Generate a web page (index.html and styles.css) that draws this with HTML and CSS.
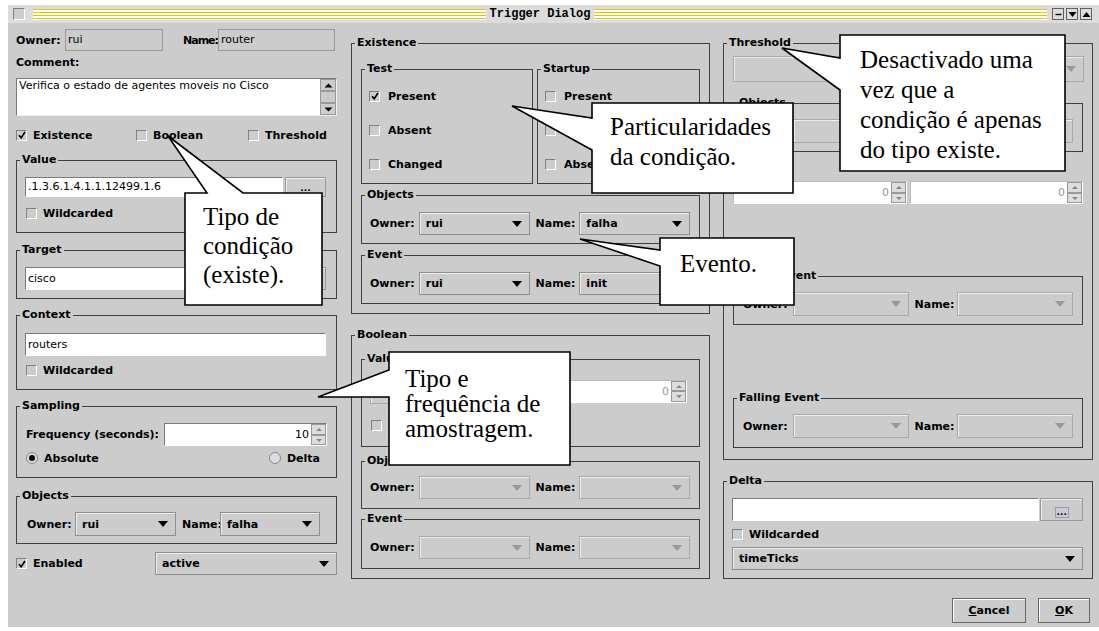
FILE: index.html
```html
<!DOCTYPE html>
<html lang="pt">
<head>
    <meta charset="UTF-8">
    <meta name="viewport" content="width=device-width, initial-scale=1.0">
    <title>Trigger Dialog</title>
    <link rel="stylesheet" href="styles.css">
</head>
<body>
<div class="window">
    <div class="titlebar">
        <span class="tb-box"></span>
        <span class="stripes"></span>
        <span class="tb-title">Trigger Dialog</span>
        <span class="stripes"></span>
        <span class="tb-btns">
            <span class="tb-btn"><svg width="9" height="9"><path d="M1.5 4.5h6" stroke="#000" stroke-width="1.4"/></svg></span>
            <span class="tb-btn"><svg width="9" height="9"><path d="M0.5 2h8l-4 5z" fill="#000"/></svg></span>
            <span class="tb-btn"><svg width="9" height="9"><path d="M0.5 7h8l-4-5z" fill="#000"/></svg></span>
        </span>
    </div>

    <div class="content">
        <!-- coluna esquerda -->
        <div class="col col-left">
            <div class="row top-row">
                <span class="lbl owner-lbl">Owner:</span>
                <span class="field off owner-f">rui</span>
                <span class="lbl name-lbl">Name:</span>
                <span class="field off name-f">router</span>
            </div>
            <div class="lbl comment-lbl">Comment:</div>
            <div class="textarea">
                <span class="ta-text">Verifica o estado de agentes moveis no Cisco</span>
                <span class="vscroll">
                    <span class="sb-btn"><svg width="9" height="5"><path d="M0.5 4.5h8l-4-4z" fill="#000"/></svg></span>
                    <span class="sb-thumb"></span>
                    <span class="sb-track"></span>
                    <span class="sb-btn"><svg width="9" height="5"><path d="M0.5 0.5h8l-4 4z" fill="#000"/></svg></span>
                </span>
            </div>
            <div class="row kinds">
                <span class="check k-exist"><span class="cb on"><svg width="8" height="8"><path d="M1 4.2l2.2 2.6L7 1" fill="none" stroke="#000" stroke-width="1.6"/></svg></span>Existence</span>
                <span class="check k-bool"><span class="cb"></span>Boolean</span>
                <span class="check"><span class="cb"></span>Threshold</span>
            </div>

            <fieldset class="grp g-value">
                <legend>Value</legend>
                <div class="row">
                    <span class="field oid">.1.3.6.1.4.1.1.12499.1.6</span>
                    <span class="dots">...</span>
                </div>
                <span class="check wc"><span class="cb"></span>Wildcarded</span>
            </fieldset>

            <fieldset class="grp g-target">
                <legend>Target</legend>
                <div class="row">
                    <span class="field oid tall">cisco</span>
                    <span class="dots tall">...</span>
                </div>
            </fieldset>

            <fieldset class="grp g-context">
                <legend>Context</legend>
                <span class="field full tall">routers</span>
                <span class="check wc2"><span class="cb"></span>Wildcarded</span>
            </fieldset>

            <fieldset class="grp g-sampling">
                <legend>Sampling</legend>
                <div class="row">
                    <span class="lbl freq-lbl">Frequency (seconds):</span>
                    <span class="spin freq-spin">
                        <span class="spin-val">10</span>
                        <span class="spin-btns"><span class="sp-up"></span><span class="sp-down"></span></span>
                    </span>
                </div>
                <div class="row radios">
                    <span class="check"><span class="radio on"></span>Absolute</span>
                    <span class="check"><span class="radio"></span>Delta</span>
                </div>
            </fieldset>

            <fieldset class="grp g-objects">
                <legend>Objects</legend>
                <div class="row">
                    <span class="lbl own-lbl">Owner:</span>
                    <span class="combo c-own">rui<i class="arr"></i></span>
                    <span class="lbl nm-lbl">Name:</span>
                    <span class="combo c-nm">falha<i class="arr"></i></span>
                </div>
            </fieldset>

            <div class="row enabled-row">
                <span class="check en"><span class="cb on"><svg width="8" height="8"><path d="M1 4.2l2.2 2.6L7 1" fill="none" stroke="#000" stroke-width="1.6"/></svg></span>Enabled</span>
                <span class="combo c-active">active<i class="arr"></i></span>
            </div>
        </div>

        <!-- coluna do meio -->
        <div class="col col-mid">
            <fieldset class="grp g-exist">
                <legend>Existence</legend>
                <div class="row sub-row">
                    <fieldset class="grp g-test">
                        <legend>Test</legend>
                        <span class="check"><span class="cb on"><svg width="8" height="8"><path d="M1 4.2l2.2 2.6L7 1" fill="none" stroke="#000" stroke-width="1.6"/></svg></span>Present</span>
                        <span class="check"><span class="cb"></span>Absent</span>
                        <span class="check"><span class="cb"></span>Changed</span>
                    </fieldset>
                    <fieldset class="grp g-startup">
                        <legend>Startup</legend>
                        <span class="check"><span class="cb"></span>Present</span>
                        <span class="check"><span class="cb"></span></span>
                        <span class="check"><span class="cb"></span>Abse</span>
                    </fieldset>
                </div>
                <fieldset class="grp g-eobj">
                    <legend>Objects</legend>
                    <div class="row">
                        <span class="lbl m-own">Owner:</span>
                        <span class="combo m-combo">rui<i class="arr"></i></span>
                        <span class="lbl m-nm">Name:</span>
                        <span class="combo m-combo">falha<i class="arr"></i></span>
                    </div>
                </fieldset>
                <fieldset class="grp g-eevent">
                    <legend>Event</legend>
                    <div class="row">
                        <span class="lbl m-own">Owner:</span>
                        <span class="combo m-combo">rui<i class="arr"></i></span>
                        <span class="lbl m-nm">Name:</span>
                        <span class="combo m-combo">init<i class="arr"></i></span>
                    </div>
                </fieldset>
            </fieldset>

            <fieldset class="grp g-bool">
                <legend>Boolean</legend>
                <fieldset class="grp g-bval">
                    <legend>Value</legend>
                    <div class="row">
                        <span class="combo off b-op"><i class="arr"></i></span>
                        <span class="spin off b-spin">
                            <span class="spin-val">0</span>
                            <span class="spin-btns"><span class="sp-up"></span><span class="sp-down"></span></span>
                        </span>
                    </div>
                    <span class="check dis b-start"><span class="cb"></span>S</span>
                </fieldset>
                <fieldset class="grp g-bobj">
                    <legend>Objects</legend>
                    <div class="row">
                        <span class="lbl m-own">Owner:</span>
                        <span class="combo off m-combo"><i class="arr"></i></span>
                        <span class="lbl m-nm">Name:</span>
                        <span class="combo off m-combo"><i class="arr"></i></span>
                    </div>
                </fieldset>
                <fieldset class="grp g-bevent">
                    <legend>Event</legend>
                    <div class="row">
                        <span class="lbl m-own">Owner:</span>
                        <span class="combo off m-combo"><i class="arr"></i></span>
                        <span class="lbl m-nm">Name:</span>
                        <span class="combo off m-combo"><i class="arr"></i></span>
                    </div>
                </fieldset>
            </fieldset>
        </div>

        <!-- coluna direita -->
        <div class="col col-right">
            <fieldset class="grp g-thresh">
                <legend>Threshold</legend>
                <span class="combo off t-start"><i class="arr"></i></span>
                <fieldset class="grp g-tobj">
                    <legend>Objects</legend>
                    <div class="row">
                        <span class="r-own"></span>
                        <span class="combo off r-combo"><i class="arr"></i></span>
                        <span class="r-nm"></span>
                        <span class="combo off r-combo"><i class="arr"></i></span>
                    </div>
                </fieldset>
                <div class="row t-spins">
                    <span class="spin off t-spin1">
                        <span class="spin-val">0</span>
                        <span class="spin-btns"><span class="sp-up"></span><span class="sp-down"></span></span>
                    </span>
                    <span class="spin off t-spin2">
                        <span class="spin-val">0</span>
                        <span class="spin-btns"><span class="sp-up"></span><span class="sp-down"></span></span>
                    </span>
                </div>
                <fieldset class="grp g-rise">
                    <legend>Rising Event</legend>
                    <div class="row">
                        <span class="lbl r-own">Owner:</span>
                        <span class="combo off r-combo"><i class="arr"></i></span>
                        <span class="lbl r-nm">Name:</span>
                        <span class="combo off r-combo"><i class="arr"></i></span>
                    </div>
                </fieldset>
                <fieldset class="grp g-fall">
                    <legend>Falling Event</legend>
                    <div class="row">
                        <span class="lbl r-own">Owner:</span>
                        <span class="combo off r-combo"><i class="arr"></i></span>
                        <span class="lbl r-nm">Name:</span>
                        <span class="combo off r-combo"><i class="arr"></i></span>
                    </div>
                </fieldset>
            </fieldset>

            <fieldset class="grp g-delta">
                <legend>Delta</legend>
                <div class="row">
                    <span class="field tall d-field"></span>
                    <span class="dots tall d-dots"><span class="focus">...</span></span>
                </div>
                <span class="check wc3"><span class="cb"></span>Wildcarded</span>
                <span class="combo d-combo">timeTicks<i class="arr"></i></span>
            </fieldset>

            <div class="row btn-row">
                <span class="btn b-cancel"><u>C</u>ancel</span>
                <span class="btn b-ok"><u>O</u>K</span>
            </div>
        </div>
    </div>
</div>

<!-- balões de anotação -->
<svg class="callouts" width="1099" height="631">
    <polygon points="840,35 1065,35 1065,171 840,171 840,90 782,48 840,58" />
    <polygon points="592,103 793,103 793,193 592,193 592,150 512,106 592,118" />
    <polygon points="185,193 207,193 168,136 243,193 322,193 322,305 185,305" />
    <polygon points="660,238 794,238 794,305 660,305 660,266 580,239 660,250" />
    <polygon points="389,352 570,352 570,465 389,465 389,397 318,397 389,370" />
</svg>
<div class="note n-desact">Desactivado uma<br>vez que a<br>condição é apenas<br>do tipo existe.</div>
<div class="note n-partic">Particularidades<br>da condição.</div>
<div class="note n-tipo">Tipo de<br>condição<br>(existe).</div>
<div class="note n-evento">Evento.</div>
<div class="note n-amostra">Tipo e<br>frequência de<br>amostragem.</div>
</body>
</html>
```

FILE: styles.css
```css
body {
    margin: 0;
    background-color: #fff;
    font-family: "DejaVu Sans", Verdana, sans-serif;
    font-size: 11px;
    color: #000;
}
.window {
    margin: 5px 0 0 8px;
    width: 1091px;
    height: 622px;
    background-color: #ccc;
}

/* barra de titulo */
.titlebar {
    display: flex;
    align-items: center;
    height: 18px;
    padding: 0 7px 0 5px;
    background-color: #dcdcdc;
}
.tb-box {
    width: 10px;
    height: 10px;
    border: 1px solid;
    border-color: #808080 #fff #fff #808080;
    background-color: #ccc;
}
.stripes {
    flex: 1;
    height: 11px;
    background: repeating-linear-gradient(to bottom, #e8c400 0 1px, #fff 1px 3px);
}
.tb-box + .stripes {
    margin-left: 8px;
}
.tb-title {
    padding: 0 4px;
    font-family: "Liberation Mono", monospace;
    font-weight: bold;
    font-size: 12px;
}
.tb-btns {
    display: flex;
    gap: 2px;
    margin-left: 5px;
}
.tb-btn {
    display: flex;
    align-items: center;
    justify-content: center;
    width: 10px;
    height: 10px;
    border: 1px solid #606060;
    background-color: #ddd;
}

/* colunas */
.content {
    display: flex;
    padding: 6px 6px 0 8px;
}
.col {
    display: flex;
    flex-direction: column;
}
.col-left {
    width: 321px;
}
.col-mid {
    width: 359px;
    margin-left: 14px;
}
.col-right {
    width: 370px;
    margin-left: 13px;
}
.row {
    display: flex;
    align-items: center;
}
.lbl {
    font-weight: bold;
    white-space: nowrap;
}

/* campos */
.field {
    display: block;
    box-sizing: border-box;
    height: 20px;
    line-height: 18px;
    padding-left: 2px;
    border: 1px solid;
    border-color: #7a7a7a #fff #fff #7a7a7a;
    background-color: #fff;
    white-space: nowrap;
    overflow: hidden;
}
.field.tall {
    height: 23px;
    line-height: 21px;
}
.field.off {
    height: 22px;
    line-height: 20px;
    background-color: #ccc;
    border-color: #9a9a9a;
}
.dots {
    box-sizing: border-box;
    display: flex;
    align-items: flex-end;
    justify-content: center;
    height: 20px;
    margin-left: 2px;
    padding-bottom: 3px;
    border: 1px solid #9a9a9a;
    box-shadow: inset 1px 1px 0 #eee;
    font-weight: bold;
    font-size: 9px;
    line-height: 9px;
}
.dots.tall {
    height: 23px;
}
.combo {
    box-sizing: border-box;
    display: flex;
    align-items: center;
    height: 24px;
    padding-left: 6px;
    border: 1px solid #8f8f8f;
    box-shadow: inset 1px 1px 0 #eee;
    background-color: #ccc;
    font-weight: bold;
}
.arr {
    margin-left: auto;
    margin-right: 7px;
    border-left: 5px solid transparent;
    border-right: 5px solid transparent;
    border-top: 6px solid #000;
}
.combo.off {
    border-color: #aaa;
}
.combo.off .arr {
    border-top-color: #999;
}
.spin {
    box-sizing: border-box;
    display: flex;
    height: 23px;
    border: 1px solid;
    border-color: #7a7a7a #fff #fff #7a7a7a;
    background-color: #fff;
}
.spin-val {
    flex: 1;
    text-align: right;
    line-height: 21px;
    padding-right: 2px;
}
.spin.off {
    border-color: #bbb #fff #fff #bbb;
}
.spin.off .spin-val {
    color: #999;
}
.spin-btns {
    display: flex;
    flex-direction: column;
    width: 15px;
}
.sp-up, .sp-down {
    flex: 1;
    border: 1px solid #999;
    background-color: #ddd;
    position: relative;
}
.sp-up::after, .sp-down::after {
    content: "";
    position: absolute;
    left: 4px;
    top: 3px;
    border-left: 3px solid transparent;
    border-right: 3px solid transparent;
}
.sp-up::after {
    border-bottom: 3px solid #888;
}
.sp-down::after {
    border-top: 3px solid #888;
}

/* caixas e radios */
.check {
    display: flex;
    align-items: center;
    height: 14px;
    font-weight: bold;
}
.cb {
    box-sizing: border-box;
    display: flex;
    align-items: center;
    justify-content: center;
    width: 11px;
    height: 11px;
    margin-right: 6px;
    border: 1px solid;
    border-color: #808080 #fff #fff #808080;
    background-color: #ccc;
}
.check.dis {
    color: #999;
}
.radio {
    box-sizing: border-box;
    display: flex;
    align-items: center;
    justify-content: center;
    width: 12px;
    height: 12px;
    margin-right: 6px;
    border-radius: 50%;
    border: 1px solid #888;
    background-color: #ddd;
}
.radio.on::after {
    content: "";
    width: 6px;
    height: 6px;
    border-radius: 50%;
    background-color: #000;
}

/* grupos */
.grp {
    --pl: 8px;
    box-sizing: border-box;
    min-width: 0;
    margin: 0;
    padding: 11px 9px 0 var(--pl);
    border: 1px solid #404040;
}
.grp legend {
    margin-left: calc(3px - var(--pl));
    padding: 0 2px;
    font-weight: bold;
    line-height: 12px;
}

/* coluna esquerda */
.top-row {
    height: 22px;
}
.owner-lbl {
    width: 49px;
}
.owner-f {
    width: 98px;
}
.name-lbl {
    width: 35px;
    margin-left: 20px;
    letter-spacing: -1px;
}
.name-f {
    width: 117px;
}
.comment-lbl {
    margin-top: 5px;
    line-height: 13px;
}
.textarea {
    box-sizing: border-box;
    display: flex;
    margin-top: 9px;
    height: 38px;
    border: 1px solid;
    border-color: #7a7a7a #eee #eee #7a7a7a;
    background-color: #fff;
}
.ta-text {
    flex: 1;
    padding: 0 2px;
    line-height: 14px;
}
.vscroll {
    display: flex;
    flex-direction: column;
    width: 16px;
    background-color: #ccc;
}
.sb-btn {
    display: flex;
    align-items: center;
    justify-content: center;
    height: 12px;
    border: 1px solid #999;
    box-sizing: border-box;
}
.sb-thumb {
    height: 12px;
    border: 1px solid #999;
    background-color: #ccc;
    box-sizing: border-box;
}
.sb-track {
    flex: 1;
}
.kinds {
    margin-top: 12px;
    height: 14px;
}
.k-exist {
    width: 120px;
}
.k-bool {
    width: 112px;
}
.g-value {
    margin-top: 12px;
    height: 79px;
}
.oid {
    width: 258px;
}
.dots {
    width: 41px;
}
.wc {
    margin-top: 9px;
    margin-left: 1px;
}
.g-target {
    margin-top: 11px;
    height: 55px;
}
.g-context {
    margin-top: 10px;
    height: 81px;
    padding-top: 12px;
}
.full {
    width: 301px;
}
.wc2 {
    margin-top: 7px;
    margin-left: 1px;
}
.g-sampling {
    margin-top: 10px;
    height: 78px;
}
.freq-lbl {
    width: 138px;
    margin-left: 1px;
}
.freq-spin {
    width: 163px;
}
.radios {
    justify-content: space-between;
    margin-top: 5px;
    margin-left: 1px;
    padding-right: 7px;
}
.g-objects {
    margin-top: 12px;
    height: 54px;
    padding-top: 10px;
}
.own-lbl {
    width: 48px;
    margin-left: 2px;
}
.c-own {
    width: 101px;
}
.nm-lbl {
    width: 38px;
    margin-left: 6px;
}
.c-nm {
    width: 100px;
}
.enabled-row {
    margin-top: 8px;
    height: 23px;
}
.en {
    width: 139px;
}
.c-active {
    flex: 1;
    height: 23px;
}

/* coluna do meio */
.g-exist {
    --pl: 9px;
    margin-top: 8px;
    height: 277px;
    padding-top: 14px;
}
.sub-row {
    align-items: flex-start;
    gap: 4px;
}
.g-test, .g-startup {
    --pl: 7px;
    height: 121px;
    padding-top: 14px;
}
.g-test {
    width: 172px;
}
.g-startup {
    width: 163px;
}
.g-test .check, .g-startup .check {
    margin-bottom: 20px;
}
.g-test .cb, .g-startup .cb {
    margin-right: 8px;
}
.g-eobj {
    margin-top: 5px;
    height: 55px;
}
.g-eevent {
    margin-top: 5px;
    height: 55px;
}
.m-own {
    width: 49px;
}
.m-combo {
    width: 111px;
    height: 23px;
}
.m-nm {
    width: 44px;
    margin-left: 6px;
}
.g-bool {
    --pl: 9px;
    margin-top: 15px;
    height: 250px;
    padding-top: 12px;
}
.g-bval {
    height: 94px;
    padding-top: 13px;
}
.b-op {
    width: 120px;
    height: 26px;
}
.b-spin {
    width: 195px;
    margin-left: 2px;
}
.b-start {
    margin-top: 14px;
    margin-left: 1px;
}
.g-bobj {
    margin-top: 8px;
    height: 54px;
    padding-top: 9px;
}
.g-bevent {
    margin-top: 4px;
    height: 56px;
    padding-top: 11px;
}

/* coluna direita */
.g-thresh {
    --pl: 9px;
    margin-top: 8px;
    height: 423px;
    padding-top: 7px;
}
.t-start {
    height: 26px;
    margin-right: -1px;
}
.g-tobj {
    margin-top: 15px;
    height: 55px;
    padding-top: 10px;
}
.t-spins {
    margin-top: 29px;
    gap: 3px;
}
.t-spin1 {
    width: 175px;
}
.t-spin2 {
    width: 174px;
}
.g-rise {
    margin-top: 66px;
    height: 55px;
    padding-top: 10px;
}
.g-fall {
    margin-top: 67px;
    height: 56px;
    padding-top: 10px;
}
.r-own {
    width: 50px;
    margin-left: 1px;
}
.r-combo {
    width: 116px;
}
.r-nm {
    width: 43px;
    margin-left: 6px;
}
.g-delta {
    margin-top: 15px;
    height: 104px;
    padding-top: 11px;
}
.d-field {
    width: 310px;
}
.d-dots {
    width: 43px;
    margin-left: 1px;
}
.focus {
    padding: 0 1px;
    outline: 1px solid #9999cc;
}
.wc3 {
    margin-top: 6px;
}
.d-combo {
    margin-top: 6px;
    height: 23px;
}
.btn-row {
    justify-content: flex-end;
    gap: 12px;
    margin-top: 19px;
    margin-right: 3px;
}
.btn {
    box-sizing: border-box;
    display: flex;
    align-items: center;
    justify-content: center;
    height: 25px;
    border: 1px solid #666;
    box-shadow: inset 1px 1px 0 #fff;
    font-weight: bold;
}
.b-cancel {
    width: 74px;
}
.b-ok {
    width: 52px;
}

/* anotacoes */
.callouts {
    position: absolute;
    left: 0;
    top: 0;
}
.callouts polygon {
    fill: #fff;
    stroke: #000;
    stroke-width: 1.6;
}
.note {
    position: absolute;
    font-family: "Liberation Serif", "Times New Roman", serif;
    font-size: 25px;
    line-height: 30px;
    white-space: nowrap;
}
.n-desact {
    left: 860px;
    top: 45px;
}
.n-partic {
    left: 610px;
    top: 112px;
}
.n-tipo {
    left: 203px;
    top: 202px;
    line-height: 29px;
}
.n-evento {
    left: 680px;
    top: 249px;
}
.n-amostra {
    left: 405px;
    top: 366px;
    line-height: 25px;
}
```
